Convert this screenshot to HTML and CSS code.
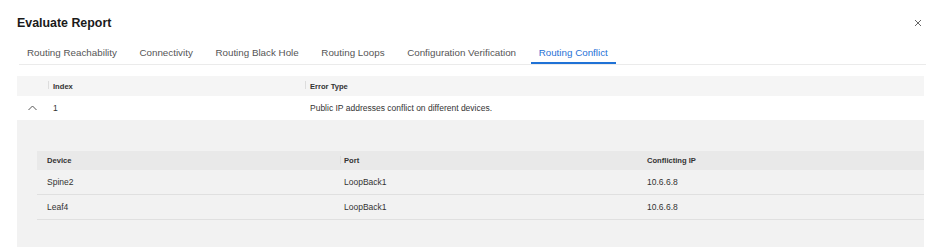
FILE: index.html
```html
<!DOCTYPE html>
<html>
<head>
<title>Evaluate Report</title>
<link rel="stylesheet" href="styles.css">
</head>
<body>
	<div class="dialog">
		<div class="dialog-head">
			<h1>Evaluate Report</h1>
			<svg class="close" width="8" height="8" viewBox="0 0 8 8">
				<path d="M1 1L7 7M7 1L1 7" stroke="#666" stroke-width="1" fill="none"/>
			</svg>
		</div>

		<div class="tabs">
			<div class="tab">Routing Reachability</div>
			<div class="tab">Connectivity</div>
			<div class="tab">Routing Black Hole</div>
			<div class="tab">Routing Loops</div>
			<div class="tab">Configuration Verification</div>
			<div class="tab active">Routing Conflict</div>
		</div>

		<div class="report">
			<div class="row head">
				<div class="cell"></div>
				<div class="cell sep">Index</div>
				<div class="cell sep">Error Type</div>
			</div>
			<div class="row">
				<div class="cell toggle">
					<svg width="9" height="6" viewBox="0 0 9 6">
						<polyline points="0.5,5 4.5,1 8.5,5" stroke="#555" stroke-width="1" fill="none"/>
					</svg>
				</div>
				<div class="cell">1</div>
				<div class="cell">Public IP addresses conflict on different devices.</div>
			</div>

			<!-- expanded detail -->
			<div class="detail">
				<div class="sub head">
					<div class="cell first">Device</div>
					<div class="cell sep">Port</div>
					<div class="cell">Conflicting IP</div>
				</div>
				<div class="sub">
					<div class="cell first">Spine2</div>
					<div class="cell">LoopBack1</div>
					<div class="cell">10.6.6.8</div>
				</div>
				<div class="sub">
					<div class="cell first">Leaf4</div>
					<div class="cell">LoopBack1</div>
					<div class="cell">10.6.6.8</div>
				</div>
			</div>
		</div>
	</div>
</body>
</html>
```

FILE: styles.css
```css
body
{
	margin: 0;
	background-color: #ffffff;
	font-family: "Liberation Sans", Arial, sans-serif;
	color: #333333;
}

.dialog
{
	width: 907px;
	padding: 0 13px 0 17px;
}

.dialog-head
{
	height: 46px;
	display: flex;
	align-items: center;
	justify-content: space-between;
}

h1
{
	margin: 0;
	font-size: 12.4px;
	font-weight: bold;
	color: #1a1a1a;
}

.close
{
	margin-right: 2px;
}

.tabs
{
	display: flex;
	gap: 6.6px;
	margin: 0 -2px 0 2px;
	border-bottom: 1px solid #ebebeb;
}

.tab
{
	padding: 0 8px 2px 8px;
	line-height: 14px;
	font-size: 9.8px;
	color: #555555;
	border-bottom: 2px solid transparent;
}

.tab.active
{
	color: #1f72d6;
	border-bottom-color: #1f72d6;
}

.report
{
	margin-top: 11px;
	font-size: 8.5px;
}

.row
{
	display: grid;
	grid-template-columns: 31px 257px 1fr;
	height: 24px;
	align-items: center;
}

.row.head
{
	height: 20px;
	background-color: #f5f5f5;
}

.head .cell
{
	font-weight: bold;
	font-size: 7.6px;
	color: #333333;
}

.cell
{
	position: relative;
	padding-left: 5px;
	white-space: nowrap;
}

/* short divider before header titles */
.cell.sep::before
{
	content: "";
	position: absolute;
	left: 0;
	top: 50%;
	margin-top: -5px;
	height: 8px;
	border-left: 1px solid #dddddd;
}

.toggle
{
	padding-left: 11px;
	display: flex;
	align-items: center;
}

.detail
{
	background-color: #f2f2f2;
	padding: 31px 0 27px 20px;
}

.sub
{
	display: grid;
	grid-template-columns: 303px 303px 1fr;
	height: 24px;
	align-items: center;
	border-bottom: 1px solid #e0e0e0;
}

.sub.head
{
	height: 19px;
	background-color: #e9e9e9;
	border-bottom: none;
}

.sub .cell
{
	padding-left: 4px;
}

.sub .cell.first
{
	padding-left: 10px;
}
```
